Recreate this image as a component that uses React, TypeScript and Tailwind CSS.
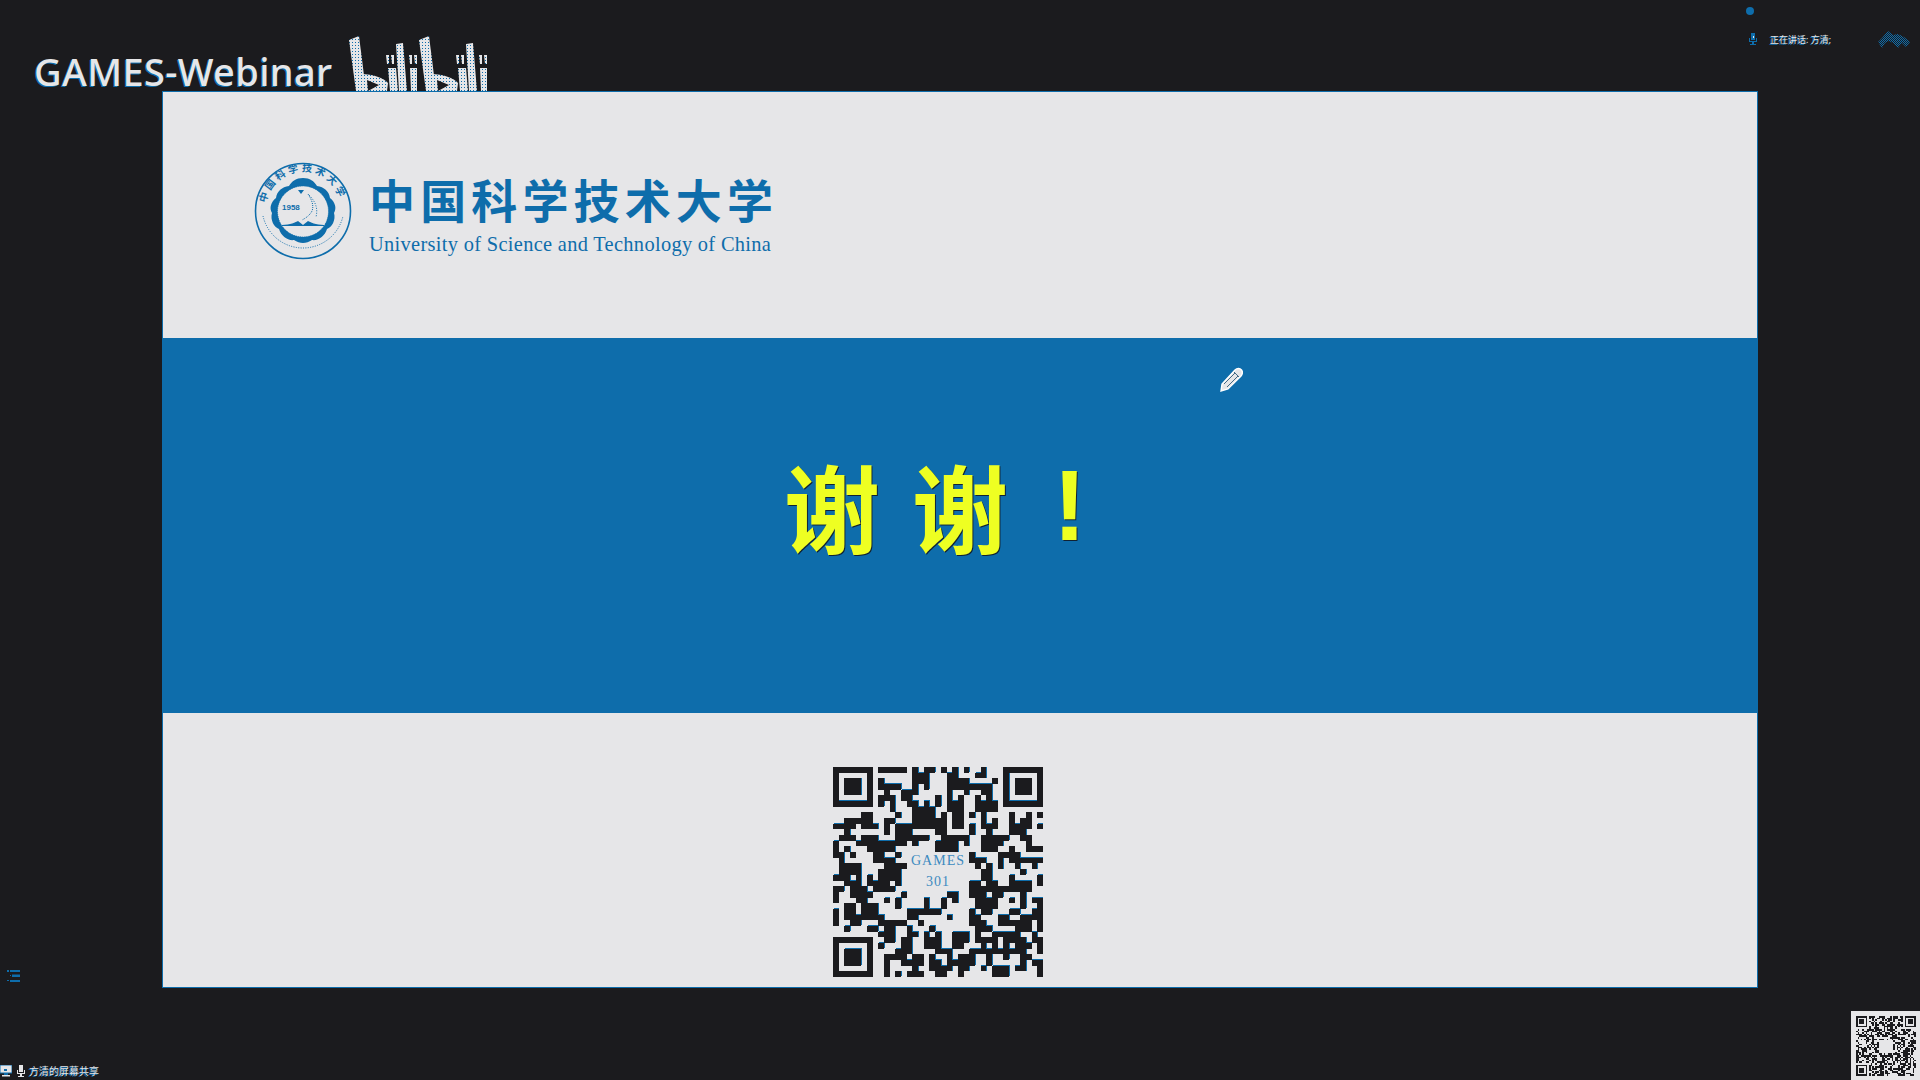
// Black runs per row of the QR code, as [from, to] pairs measured along the code's width (module 17 units, origin 40).
const RUNS: number[][] = [
  [176,260,278,295,312,345,363,380,397,414,431,448,482,498],
  [278,330,380,415,465,498],
  [176,192,278,330,380,448,515,532],
  [176,243,278,295,312,328,380,515],
  [192,209,243,295,380,397,431,448,482,515],
  [176,226,243,278,346,362,380,397,414,431,465,482,499,515],
  [176,192,209,226,260,295,312,328,346,362,380,431,465,532],
  [209,226,278,345,380,431,465,532],
  [125,158,226,243,278,345,363,380,397,431,448,465,482,499,567,583,618,634,652,668],
  [73,158,192,226,278,380,397,431,482,499,515,532,567,583,601,634],
  [40,107,125,175,192,209,226,380,397,431,448,465,482,532,567,634,652,668],
  [73,90,192,209,226,278,346,380,448,465,499,515,567,618],
  [56,107,125,175,226,328,363,448,482,567,601,634],
  [40,56,107,260,278,295,346,414,431,448,482,550,618,634],
  [40,56,73,90,141,226,346,414,482,532,567,583,618,668],
  [40,73,90,107,158,192,226,243,448,465,532,601],
  [56,73,158,226,448,499,532,550,567,668],
  [56,124,192,260,465,482,499,515,532,550,584,601,635,652],
  [56,124,175,243,482,515,601,618],
  [40,90,107,124,141,158,175,243,482,515,567,583,652,668],
  [73,124,141,209,226,243,448,482,499,532,567,635,652,668],
  [40,73,90,141,158,226,448,635],
  [40,56,90,158,243,260,380,414,448,499,516,550,601,618],
  [40,56,107,141,192,209,226,243,312,328,363,380,397,414,465,532,567,583,601,618,635,668],
  [73,107,124,175,226,243,312,328,363,380,465,532,601,618,652,668],
  [40,56,73,107,124,175,260,362,448,465,482,516,567,601,635,668],
  [40,56,73,192,260,295,380,397,448,482,533,567,601,668],
  [40,56,90,124,175,260,295,312,448,499,533,635,652,668],
  [73,90,141,175,192,226,260,278,328,345,465,516,584,635,652,668],
  [175,226,260,295,312,328,346,362,397,448,465,482,516,601,635,652],
  [192,226,243,278,312,362,397,448,465,532,550,618,635,668],
  [175,192,243,278,312,362,397,431,482,499,516,533,550,567,584,635,652,668],
  [226,278,346,397,448,618,652,668],
  [192,260,278,312,329,346,380,397,414,465,499,516,550,567,601,635],
  [192,209,243,312,329,362,380,465,499,516,601,618,635,668],
  [192,209,278,295,329,397,414,448,482,499,516,567,584,618,652,668],
  [192,209,226,243,260,312,346,380,414,431,516,567,652,668],
];

function mainQr() {
  const grid: boolean[][] = RUNS.map((runs) => {
    const row = new Array(37).fill(false);
    for (let i = 0; i < runs.length; i += 2) {
      const a = Math.round((runs[i] - 40) / 17);
      const b = Math.round((runs[i + 1] - 40) / 17);
      for (let x = a; x < b && x < 37; x++) row[x] = true;
    }
    return row;
  });
  const finder = (ox: number, oy: number) => {
    for (let y = -1; y < 8; y++) for (let x = -1; x < 8; x++) {
      const ax = ox + x, ay = oy + y;
      if (ax < 0 || ay < 0 || ax > 36 || ay > 36) continue;
      grid[ay][ax] = x >= 0 && x <= 6 && y >= 0 && y <= 6 && (x === 0 || x === 6 || y === 0 || y === 6 || (x >= 2 && x <= 4 && y >= 2 && y <= 4));
    }
  };
  finder(0, 0); finder(30, 0); finder(0, 30);
  return grid.map((r) => r.map((c) => (c ? "#" : ".")).join(""));
}

function smallQr() {
  const rows: string[] = [];
  let s = 7;
  for (let y = 0; y < 37; y++) {
    let r = "";
    for (let x = 0; x < 37; x++) {
      s = (s * 1103515245 + 12345) & 0x7fffffff;
      const hole = x > 13 && x < 23 && y > 14 && y < 23;
      r += !hole && (s >> 16) % 2 ? "#" : ".";
    }
    rows.push(r);
  }
  const finder = (ox: number, oy: number) => {
    for (let y = -1; y < 8; y++) for (let x = -1; x < 8; x++) {
      const ax = ox + x, ay = oy + y;
      if (ax < 0 || ay < 0 || ax > 36 || ay > 36) continue;
      const on = x >= 0 && x <= 6 && y >= 0 && y <= 6 && (x === 0 || x === 6 || y === 0 || y === 6 || (x >= 2 && x <= 4 && y >= 2 && y <= 4));
      rows[ay] = rows[ay].slice(0, ax) + (on ? "#" : ".") + rows[ay].slice(ax + 1);
    }
  };
  finder(0, 0); finder(30, 0); finder(0, 30);
  return rows;
}

function QrCode({ rows, size, edge }: { rows: string[]; size: number; edge?: boolean }) {
  return (
    <svg width={size} height={size} viewBox="0 0 37 37" shapeRendering="crispEdges" className="block">
      {edge && rows.map((r, y) => r.split("").map((c, x) => c === "#" ? <rect key={`e${x}-${y}`} x={x + 0.12} y={y - 0.1} width="1" height="1" fill="#0e6dab" /> : null))}
      {rows.map((r, y) => r.split("").map((c, x) => c === "#" ? <rect key={`${x}-${y}`} x={x} y={y} width="1" height="1" fill="#1b1b1e" /> : null))}
    </svg>
  );
}

function Bilibili() {
  const group = (dx: number) => (
    <g transform={`translate(${dx} 0)`} fill="url(#dots)">
      <path d="M0 4 L10 0 L17 55 L7 55 Z" />
      <path fillRule="evenodd" d="M12 38 C24 38 35 42 39 47 L38 55 L14 55 Z M18 44 L19 55 L30 49 Z" />
      <path d="M37 19 L40 19 L40 28 L38 28 Z M42 19 L45 19 L45 28 L43 28 Z" />
      <path d="M39 32 L47 32 L49 55 L41 55 Z" />
      <path d="M47 8 L54 7 L58 55 L50 55 Z" />
      <path d="M60 19 L63 19 L63 28 L61 28 Z M65 19 L68 19 L68 28 L66 28 Z" />
      <path d="M61 32 L68 32 L68 55 L62 55 Z" />
    </g>
  );
  return (
    <svg width="142" height="55" viewBox="0 0 142 55" className="block">
      <defs>
        <pattern id="dots" width="3" height="3" patternUnits="userSpaceOnUse">
          <rect width="3" height="3" fill="#e6e6e8" />
          <rect width="1" height="1" fill="#0e6dab" />
        </pattern>
      </defs>
      {group(0)}
      {group(70)}
    </svg>
  );
}

function Seal() {
  return (
    <svg width="98" height="98" viewBox="0 0 98 98" className="block shrink-0">
      <defs>
        <path id="sealArc" d="M12 41 A37.5 37.5 0 0 1 86 41" />
      </defs>
      <circle cx="49" cy="49" r="47.5" fill="none" stroke="#0e6dab" strokeWidth="1.6" />
      <text fontSize="10" fontWeight="700" fill="#0e6dab" fontFamily="'Noto Sans CJK SC',sans-serif">
        <textPath href="#sealArc" startOffset="0%" textLength="100" lengthAdjust="spacing">中国科学技术大学</textPath>
      </text>
      <path d="M9 54 A41 41 0 0 0 89 54" fill="none" stroke="#0e6dab" strokeWidth="1" strokeDasharray="1 1.4" />
      <path d="M49 16 C56 16 60 19 63 24 C70 25 75 29 76 36 C81 40 83 46 80 51 C82 58 78 65 73 67 C71 74 64 79 58 78 C52 82 46 82 40 78 C34 79 27 74 25 67 C20 65 16 58 18 51 C15 46 17 40 22 36 C23 29 28 25 35 24 C38 19 42 16 49 16 Z" fill="#0e6dab" />
      <circle cx="49" cy="49.5" r="25.5" fill="#e6e6e8" stroke="#0e6dab" strokeWidth="0.8" strokeDasharray="1 1" />
      <text x="28" y="47.5" fontSize="8" fontWeight="700" fill="#0e6dab" fontFamily="'Liberation Sans',sans-serif">1958</text>
      <path d="M28 63 C36 63 42 60 44 59 L49 63 L54 59 C56 60 62 63 70 63 L70 64 L28 64 Z" fill="#0e6dab" />
      <path d="M54 32 C58 38 60 44 58 49 C56 53 52 56 48 58" fill="none" stroke="#0e6dab" strokeWidth="1" strokeDasharray="1 1" />
      <path d="M55 33 C62 40 64 47 62 55" fill="none" stroke="#0e6dab" strokeWidth="1" strokeDasharray="1 1.5" />
      <path d="M44 28 L50 28 L47 32 Z" fill="#0e6dab" />
    </svg>
  );
}

function Waves() {
  return (
    <svg width="32" height="18" viewBox="0 0 32 18" className="block">
      <defs>
        <pattern id="wd" width="2" height="2" patternUnits="userSpaceOnUse">
          <rect width="1" height="1" fill="#0e6dab" />
          <rect x="1" y="1" width="1" height="1" fill="#0e6dab" />
        </pattern>
      </defs>
      <path d="M0 11 L4 7 L10 0 L15 4 L20 3 L26 6 L32 11 L28 16 L24 12 L20 17 L15 12 L11 10 L7 12 L4 17 Z" fill="url(#wd)" />
    </svg>
  );
}

export default function App() {
  return (
    <div className="w-[1920px] h-[1080px] bg-[#1b1b1e] flex flex-col overflow-hidden relative font-['Noto_Sans','Noto_Sans_CJK_SC',sans-serif]">
      <header className="h-[91px] shrink-0 flex items-end overflow-hidden">
        <div className="ml-[34px] text-[38px] leading-[40px] font-medium tracking-[0.35px] text-[#e6e6e8] [text-shadow:-1px_1px_0_#0e6dab]">GAMES-Webinar</div>
        <div className="ml-[17px] mb-0"><Bilibili /></div>
        <div className="ml-auto mr-[8px] self-start flex items-start">
          <div className="flex flex-col items-start pt-[7px] mr-[12px]">
            <div className="w-[8px] h-[8px] rounded-full bg-[#0e6dab]" />
            <svg width="10" height="12" viewBox="0 0 10 12" className="mt-[18px] ml-[2px] block">
              <path d="M3 0 H7 V7 H3 Z M1 5 H2 V8 H8 V5 H9 V9 H6 V11 H8 V12 H2 V11 H4 V9 H1 Z" fill="#0e6dab" />
              <rect x="5" y="3" width="1" height="2" fill="#e6e6e8" />
            </svg>
          </div>
          <div className="pt-[33px] w-[108px] text-[9px] leading-[14px] text-[#e6e6e8] [text-shadow:-1px_1px_0_#0e6dab]">正在讲话: 方清;</div>
          <div className="pt-[31px] mr-[2px]"><Waves /></div>
        </div>
      </header>

      <div className="h-[897px] shrink-0 flex">
        <div className="w-[162px] shrink-0 flex flex-col justify-end pb-[6px] pl-[7px]">
          <svg width="13" height="12" viewBox="0 0 13 12" className="block">
            <path d="M0 0 H2 V2 H0 Z M3 0 H13 V2 H3 Z M3 5 H4 V6 H3 Z M5 4.5 H13 V7 H5 Z M0 10 H2 V11 H0 Z M3 10 H13 V12 H3 Z" fill="#0e6dab" />
          </svg>
        </div>
        <main className="w-[1596px] h-[897px] flex flex-col relative border border-[#0e6dab] bg-[#e6e6e8]">
          <section className="h-[246px] shrink-0 flex items-start pl-[91px] pt-[70px]">
            <Seal />
            <div className="ml-[17px] mt-[9px] w-[404px] text-[#0e6dab]">
              <div className="flex justify-between text-[46px] leading-[54px] font-bold font-['Noto_Sans_CJK_SC',sans-serif]">
                <span>中</span><span>国</span><span>科</span><span>学</span><span>技</span><span>术</span><span>大</span><span>学</span>
              </div>
              <div className="mt-[7px] text-[20.4px] leading-[24px] tracking-[0.32px] whitespace-nowrap font-['Liberation_Serif',serif]">University of Science and Technology of China</div>
            </div>
          </section>
          <section className="h-[375px] shrink-0 bg-[#0e6dab] flex items-center pl-[621px] text-[#eeff22] [text-shadow:1px_1px_0_#123]">
            <div className="flex items-center font-bold text-[96px] leading-[110px] mt-[-41px] font-['Noto_Sans_CJK_SC',sans-serif]">
              <span>谢</span>
              <span className="ml-[32px]">谢</span>
              <span className="ml-[45px] font-['Liberation_Sans',sans-serif] text-[100px]">!</span>
            </div>
          </section>
          <section className="flex-1 flex justify-center items-start pt-[54px] pr-[44px]">
            <div className="relative w-[210px] h-[210px]">
              <QrCode rows={mainQr()} size={210} edge />
              <div className="absolute left-[65px] top-[83px] w-[80px] text-center text-[14px] leading-[21px] tracking-[1px] text-[#3d8ac0] font-['Liberation_Serif',serif]">
                <div>GAMES</div>
                <div>301</div>
              </div>
            </div>
          </section>
          <svg width="24" height="26" viewBox="0 0 24 26" className="absolute left-[1056px] top-[275px]">
            <path d="M2 24 L3 17 L16 3 C18 1 21 1 22.5 3 C24 5 23.5 7 22 9 L9 22 Z" fill="#e6e6e8" stroke="#ffffff" strokeWidth="1.4" />
            <path d="M15 5 L20 10 M5 17 L16 6 M8 20 L19 9" stroke="#1b4a6b" strokeWidth="0.8" fill="none" />
          </svg>
        </main>
      </div>

      <footer className="flex-1 flex items-end justify-between">
        <div className="flex items-center h-[16px] mb-[1px] text-[10px] leading-[14px] text-[#e6e6e8] [text-shadow:-1px_1px_0_#0e6dab]">
          <svg width="12" height="12" viewBox="0 0 12 12" className="block">
            <rect x="0" y="0" width="12" height="8" fill="#e6e6e8" stroke="#0e6dab" strokeWidth="1" />
            <rect x="4" y="8" width="4" height="2" fill="#0e6dab" />
            <rect x="2" y="10" width="8" height="1.5" fill="#e6e6e8" />
            <rect x="4" y="4" width="3" height="2" fill="#0e6dab" />
          </svg>
          <svg width="10" height="12" viewBox="0 0 10 12" className="block ml-[4px]">
            <path d="M3 0 H7 V7 H3 Z M1 5 H2 V8 H8 V5 H9 V9 H6 V11 H8 V12 H2 V11 H4 V9 H1 Z" fill="#e6e6e8" />
          </svg>
          <span className="ml-[3px]">方清的屏幕共享</span>
        </div>
        <div className="w-[69px] h-[69px] bg-[#e6e6e8] pl-[5px] pt-[5px]">
          <QrCode rows={smallQr()} size={60} />
        </div>
      </footer>
    </div>
  );
}
